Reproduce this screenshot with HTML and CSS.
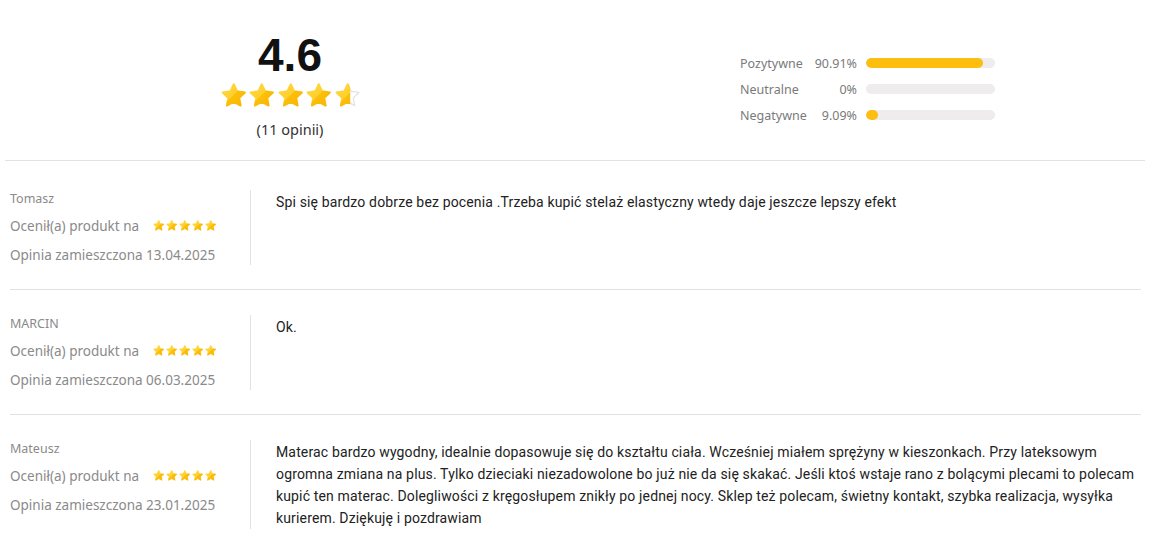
FILE: index.html
```html
<!DOCTYPE html>
<html lang="pl">
<head>
<meta charset="UTF-8" />
<meta name="viewport" content="width=device-width, initial-scale=1" />
<title>Opinie</title>
<link rel="stylesheet" href="styles.css">
</head>
<body>

<svg width="0" height="0" class="defs">
  <defs>
    <linearGradient id="gold" x1="0" y1="0" x2="1" y2="1">
      <stop offset="0" stop-color="#ffd84a" />
      <stop offset="0.5" stop-color="#ffd02a" />
      <stop offset="0.5" stop-color="#fcbf0c" />
      <stop offset="1" stop-color="#f8b500" />
    </linearGradient>
    <clipPath id="partial">
      <rect x="0" y="0" width="14" height="24" />
    </clipPath>
    <symbol id="star" viewBox="0 0 24 24">
      <path d="M12 2.6l2.8 5.8 6.3.9-4.6 4.4 1.1 6.3L12 17l-5.6 3 1.1-6.3-4.6-4.4 6.3-.9z" />
    </symbol>
  </defs>
</svg>

<section class="summary">
  <div class="score">
    <div class="score-value">4.6</div>
    <div class="stars stars-big">
      <svg class="star"><use href="#star" /></svg>
      <svg class="star"><use href="#star" /></svg>
      <svg class="star"><use href="#star" /></svg>
      <svg class="star"><use href="#star" /></svg>
      <svg class="star star-part" viewBox="0 0 24 24">
        <path class="empty" d="M12 2.6l2.8 5.8 6.3.9-4.6 4.4 1.1 6.3L12 17l-5.6 3 1.1-6.3-4.6-4.4 6.3-.9z" />
        <path class="fill" clip-path="url(#partial)" d="M12 2.6l2.8 5.8 6.3.9-4.6 4.4 1.1 6.3L12 17l-5.6 3 1.1-6.3-4.6-4.4 6.3-.9z" />
      </svg>
    </div>
    <div class="score-count">(11 opinii)</div>
  </div>

  <div class="breakdown">
    <div class="bar-row">
      <span class="bar-label">Pozytywne</span>
      <span class="bar-pct">90.91%</span>
      <div class="bar"><div class="bar-fill" style="width: 90.91%"></div></div>
    </div>
    <div class="bar-row">
      <span class="bar-label">Neutralne</span>
      <span class="bar-pct">0%</span>
      <div class="bar"><div class="bar-fill" style="width: 0%"></div></div>
    </div>
    <div class="bar-row">
      <span class="bar-label">Negatywne</span>
      <span class="bar-pct">9.09%</span>
      <div class="bar"><div class="bar-fill" style="width: 9.09%"></div></div>
    </div>
  </div>
</section>

<section class="reviews">
  <div class="review">
    <div class="review-meta">
      <div class="review-author">Tomasz</div>
      <div class="review-rating">
        Ocenił(a) produkt na
        <span class="stars stars-small">
          <svg class="star"><use href="#star" /></svg>
          <svg class="star"><use href="#star" /></svg>
          <svg class="star"><use href="#star" /></svg>
          <svg class="star"><use href="#star" /></svg>
          <svg class="star"><use href="#star" /></svg>
        </span>
      </div>
      <div class="review-date">Opinia zamieszczona 13.04.2025</div>
    </div>
    <div class="review-text">Spi się bardzo dobrze bez pocenia .Trzeba kupić stelaż elastyczny wtedy daje jeszcze lepszy efekt</div>
  </div>

  <div class="review">
    <div class="review-meta">
      <div class="review-author">MARCIN</div>
      <div class="review-rating">
        Ocenił(a) produkt na
        <span class="stars stars-small">
          <svg class="star"><use href="#star" /></svg>
          <svg class="star"><use href="#star" /></svg>
          <svg class="star"><use href="#star" /></svg>
          <svg class="star"><use href="#star" /></svg>
          <svg class="star"><use href="#star" /></svg>
        </span>
      </div>
      <div class="review-date">Opinia zamieszczona 06.03.2025</div>
    </div>
    <div class="review-text">Ok.</div>
  </div>

  <div class="review">
    <div class="review-meta">
      <div class="review-author">Mateusz</div>
      <div class="review-rating">
        Ocenił(a) produkt na
        <span class="stars stars-small">
          <svg class="star"><use href="#star" /></svg>
          <svg class="star"><use href="#star" /></svg>
          <svg class="star"><use href="#star" /></svg>
          <svg class="star"><use href="#star" /></svg>
          <svg class="star"><use href="#star" /></svg>
        </span>
      </div>
      <div class="review-date">Opinia zamieszczona 23.01.2025</div>
    </div>
    <div class="review-text">Materac bardzo wygodny, idealnie dopasowuje się do kształtu ciała. Wcześniej miałem sprężyny w kieszonkach. Przy lateksowym ogromna zmiana na plus. Tylko dzieciaki niezadowolone bo już nie da się skakać. Jeśli ktoś wstaje rano z bolącymi plecami to polecam kupić ten materac. Dolegliwości z kręgosłupem znikły po jednej nocy. Sklep też polecam, świetny kontakt, szybka realizacja, wysyłka kurierem. Dziękuję i pozdrawiam</div>
  </div>
</section>

</body>
</html>
```

FILE: styles.css
```css
body {
  margin: 0;
  background: #fff;
  color: #222;
  font-family: "Noto Sans", sans-serif;
}
.defs {
  position: absolute;
  width: 0;
  height: 0;
}

/* summary */
.summary {
  display: flex;
  height: 160px;
  margin: 0 11px 0 5px;
  border-bottom: 1px solid #e2e2e2;
}
.score {
  width: 570px;
  padding-top: 30px;
  display: flex;
  flex-direction: column;
  align-items: center;
}
.score-value {
  font-family: "Liberation Sans", Arial, sans-serif;
  font-weight: bold;
  font-size: 46px;
  line-height: 50px;
  color: #111;
}
.stars {
  display: inline-flex;
  align-items: center;
}
.star {
  fill: url(#gold);
  stroke: url(#gold);
  stroke-width: 1.6;
  stroke-linejoin: round;
}
.stars-big {
  margin-top: 1px;
  height: 29px;
}
.stars-big .star {
  width: 29.5px;
  height: 29.5px;
  margin-right: -1px;
}
.star-part .empty {
  fill: #fff;
  stroke: #e3e3e3;
  stroke-width: 1;
}
.score-count {
  margin-top: 9px;
  font-size: 14.5px;
  line-height: 20px;
  color: #333;
}

.breakdown {
  margin-left: 165px;
  padding-top: 50px;
}
.bar-row {
  display: flex;
  align-items: center;
  height: 26px;
  font-size: 12.5px;
  color: #7a7a7a;
}
.bar-label {
  width: 70px;
}
.bar-pct {
  width: 47px;
  text-align: right;
  margin-right: 9px;
}
.bar {
  width: 129px;
  height: 10px;
  border-radius: 5px;
  background: #eeecec;
  overflow: hidden;
}
.bar-fill {
  height: 100%;
  background: #fdbe10;
  border-radius: 5px;
}

/* reviews */
.reviews {
  margin: 0 15px 0 10px;
}
.review {
  display: flex;
  align-items: stretch;
  padding: 25px 0 24px;
  border-bottom: 1px solid #e2e2e2;
}
.review:first-child {
  padding-top: 29px;
}
.review:last-child {
  border-bottom: none;
}
.review-meta {
  width: 240px;
  flex-shrink: 0;
  border-right: 1px solid #e2e2e2;
  color: #8a8a8a;
  font-size: 13.5px;
}
.review-author {
  font-size: 12.5px;
  line-height: 18px;
}
.review-rating {
  display: flex;
  align-items: center;
  margin-top: 8px;
  line-height: 20px;
}
.stars-small {
  margin-left: 13px;
}
.stars-small .star {
  width: 13.5px;
  height: 13.5px;
  margin-right: -0.5px;
}
.review-date {
  margin-top: 9px;
  line-height: 20px;
}
.review-text {
  padding: 1px 5px 0 25px;
  font-family: Roboto, sans-serif;
  font-size: 14px;
  letter-spacing: 0.15px;
  line-height: 22px;
  color: #222;
}
```
